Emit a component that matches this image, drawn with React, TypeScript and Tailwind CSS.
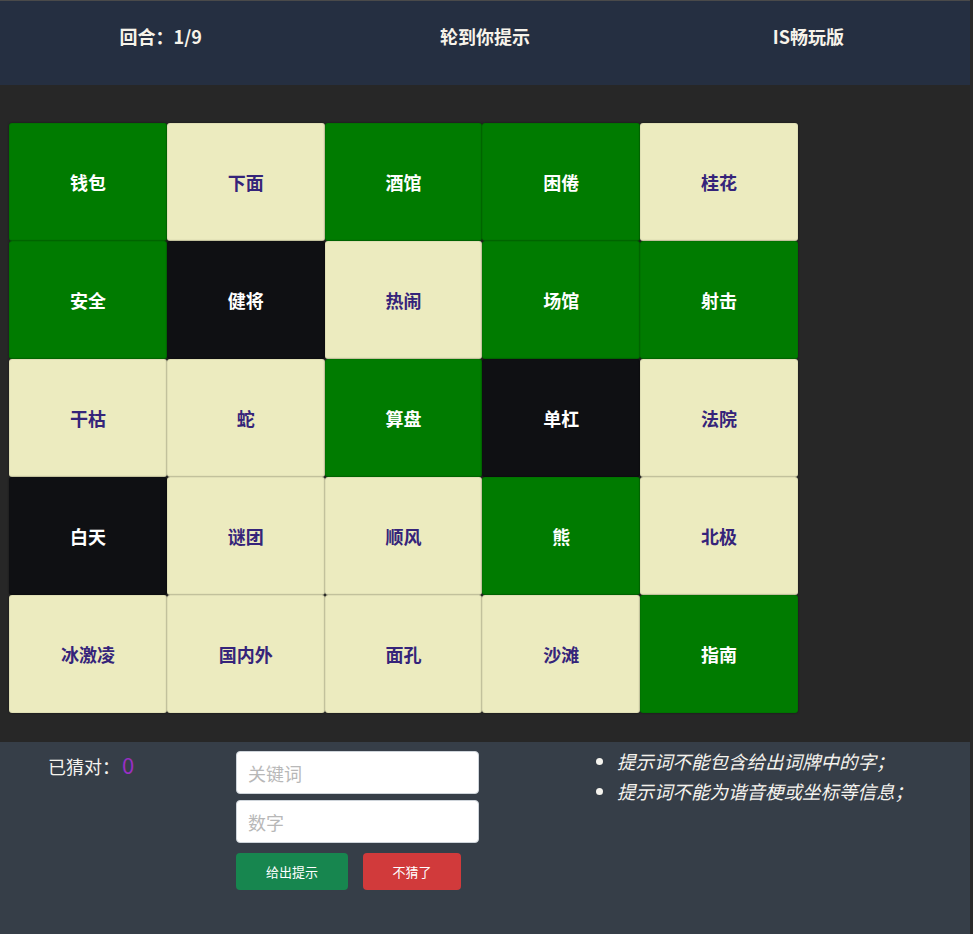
import React from 'react';

type Tone = 'green' | 'beige' | 'black';

const cards: { word: string; tone: Tone }[] = [
  { word: '钱包', tone: 'green' },
  { word: '下面', tone: 'beige' },
  { word: '酒馆', tone: 'green' },
  { word: '困倦', tone: 'green' },
  { word: '桂花', tone: 'beige' },
  { word: '安全', tone: 'green' },
  { word: '健将', tone: 'black' },
  { word: '热闹', tone: 'beige' },
  { word: '场馆', tone: 'green' },
  { word: '射击', tone: 'green' },
  { word: '干枯', tone: 'beige' },
  { word: '蛇', tone: 'beige' },
  { word: '算盘', tone: 'green' },
  { word: '单杠', tone: 'black' },
  { word: '法院', tone: 'beige' },
  { word: '白天', tone: 'black' },
  { word: '谜团', tone: 'beige' },
  { word: '顺风', tone: 'beige' },
  { word: '熊', tone: 'green' },
  { word: '北极', tone: 'beige' },
  { word: '冰激凌', tone: 'beige' },
  { word: '国内外', tone: 'beige' },
  { word: '面孔', tone: 'beige' },
  { word: '沙滩', tone: 'beige' },
  { word: '指南', tone: 'green' },
];

const toneClass: Record<Tone, string> = {
  green: 'bg-[#007b00] text-white',
  beige: 'bg-[#ecebbf] text-[#35247a]',
  black: 'bg-[#0f1013] text-white',
};

const rules = ['提示词不能包含给出词牌中的字；', '提示词不能为谐音梗或坐标等信息；'];

const App: React.FC = () => {
  return (
    <div
      className="w-[973px] min-h-[934px] bg-[#2a2a2a] flex"
      style={{ fontFamily: '"Noto Sans CJK SC", "Noto Sans", sans-serif' }}
    >
      <div className="w-[970px] flex flex-col">
        {/* top bar */}
        <div className="h-[85px] bg-[#252f41] border-t border-[#4a4a4a] grid grid-cols-3 items-start pt-[22px] text-[18px] font-bold text-[#f7f3ea] text-center">
          <div className="pr-[2px]">回合：1/9</div>
          <div>轮到你提示</div>
          <div>IS畅玩版</div>
        </div>

        {/* board */}
        <div className="h-[657px] bg-[#272727] pt-[38px] pl-[9px]">
          <div className="w-[789px] grid grid-cols-5 auto-rows-[118px]">
            {cards.map((c) => (
              <div
                key={c.word}
                className={`${toneClass[c.tone]} rounded-[3px] flex items-center justify-center text-[18px] font-bold border border-black/5 shadow-[0_0_2px_rgba(0,0,0,0.5)]`}
              >
                {c.word}
              </div>
            ))}
          </div>
        </div>

        {/* controls */}
        <div className="flex-1 bg-[#363e48] flex">
          <div className="w-[236px] pl-[48px] pt-[11px] flex items-baseline text-[18px] text-[#f5f3ee]">
            已猜对：<span className="text-[22px] text-[#9a2fc4] leading-none ml-[2px]">0</span>
          </div>
          <div className="w-[243px] pt-[9px] flex flex-col gap-[6px]">
            <input
              placeholder="关键词"
              className="h-[43px] w-full rounded-[4px] bg-white border border-[#ced4da] px-[11px] text-[18px] text-[#333] placeholder:text-[#b8b8b8] outline-none"
            />
            <input
              placeholder="数字"
              className="h-[43px] w-full rounded-[4px] bg-white border border-[#ced4da] px-[11px] text-[18px] text-[#333] placeholder:text-[#b8b8b8] outline-none"
            />
            <div className="flex gap-[15px] mt-[4px]">
              <button className="w-[112px] h-[37px] rounded-[4px] bg-[#17864f] text-white text-[13px]">给出提示</button>
              <button className="w-[98px] h-[37px] rounded-[4px] bg-[#d13a3b] text-white text-[13px]">不猜了</button>
            </div>
          </div>
          <ul className="pl-[118px] pt-[4px] list-disc text-[18.5px] italic text-[#f5f3ee] leading-[30px] marker:text-[#f5f3ee]">
            {rules.map((r) => (
              <li key={r} className="ml-[20px]">{r}</li>
            ))}
          </ul>
        </div>
      </div>
    </div>
  );
};

export default App;
